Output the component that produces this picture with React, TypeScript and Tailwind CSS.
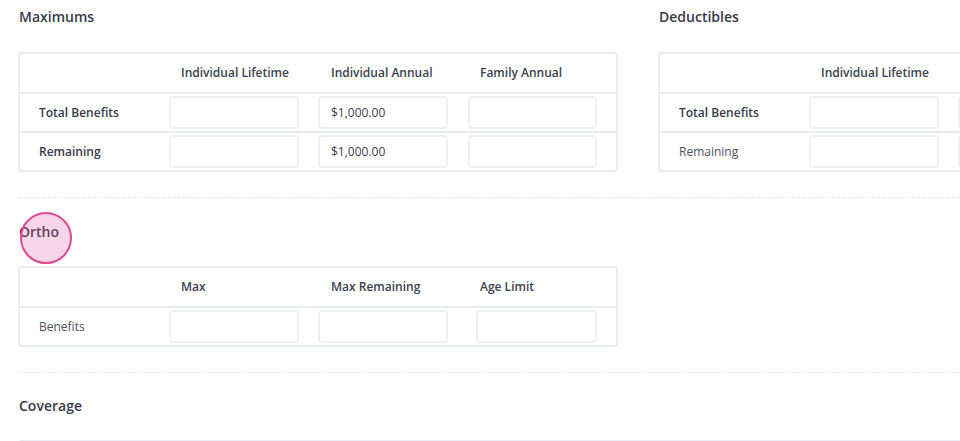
import React from "react";

type Row = { label: string; bold: boolean; values: string[] };

type Col = { title: string; width: number; inputLeft: number; inputWidth: number; textLeft: number };

const MAX_COLS: Col[] = [
  { title: "Individual Lifetime", width: 150, inputLeft: 1, inputWidth: 130, textLeft: 13 },
  { title: "Individual Annual", width: 150, inputLeft: 0, inputWidth: 130, textLeft: 13 },
  { title: "Family Annual", width: 150, inputLeft: 0, inputWidth: 129, textLeft: 12 },
];

const DED_COLS: Col[] = [
  { title: "Individual Lifetime", width: 150, inputLeft: 1, inputWidth: 130, textLeft: 13 },
  { title: "Individual Annual", width: 150, inputLeft: 0, inputWidth: 130, textLeft: 13 },
  { title: "Family Annual", width: 150, inputLeft: 0, inputWidth: 129, textLeft: 12 },
];

const ORTHO_COLS: Col[] = [
  { title: "Max", width: 150, inputLeft: 1, inputWidth: 130, textLeft: 13 },
  { title: "Max Remaining", width: 158, inputLeft: 0, inputWidth: 130, textLeft: 13 },
  { title: "Age Limit", width: 142, inputLeft: 0, inputWidth: 121, textLeft: 4 },
];

function Heading({ children }: { children: React.ReactNode }) {
  return <h3 className="h-5 pl-px text-[14px] font-semibold leading-5 text-[#353b49]">{children}</h3>;
}

function Table({ cols, rows }: { cols: Col[]; rows: Row[] }) {
  return (
    <div className="w-[600px] rounded-[4px] border-2 border-[#e8ebf0] bg-white">
      <div className="flex h-[38px] items-center text-[12px] font-semibold text-[#3b4150]">
        <div className="w-[148px] shrink-0" />
        {cols.map((c) => (
          <div key={c.title} className="shrink-0" style={{ width: c.width, paddingLeft: c.textLeft }}>
            {c.title}
          </div>
        ))}
      </div>
      {rows.map((r) => (
        <div key={r.label} className="flex h-[39px] items-center border-t-2 border-[#e8ebf0]">
          <div
            className={
              r.bold
                ? "w-[148px] shrink-0 pl-[19px] text-[12px] font-semibold text-[#353b48]"
                : "w-[148px] shrink-0 pl-[19px] text-[12px] text-[#4b5161]"
            }
          >
            {r.label}
          </div>
          {cols.map((c, i) => (
            <div key={c.title} className="shrink-0" style={{ width: c.width, paddingLeft: c.inputLeft }}>
              <input
                readOnly
                value={r.values[i] ?? ""}
                className="h-[33px] rounded-[4px] border-2 border-[#eef0f4] bg-white pl-[11px] text-[12px] text-[#3b4150] outline-none"
                style={{ width: c.inputWidth }}
              />
            </div>
          ))}
        </div>
      ))}
    </div>
  );
}

export default function App() {
  return (
    <div className="h-[441px] w-[960px] overflow-hidden bg-white pl-[18px] font-['Open_Sans','Noto_Sans',sans-serif]">
      <div className="flex w-[1300px] gap-10 pt-[7px]">
        <section className="w-[600px] shrink-0">
          <Heading>Maximums</Heading>
          <div className="mt-[25px]">
            <Table
              cols={MAX_COLS}
              rows={[
                { label: "Total Benefits", bold: true, values: ["", "$1,000.00", ""] },
                { label: "Remaining", bold: true, values: ["", "$1,000.00", ""] },
              ]}
            />
          </div>
        </section>
        <section className="w-[600px] shrink-0">
          <Heading>Deductibles</Heading>
          <div className="mt-[25px]">
            <Table
              cols={DED_COLS}
              rows={[
                { label: "Total Benefits", bold: true, values: ["", "", ""] },
                { label: "Remaining", bold: false, values: ["", "", ""] },
              ]}
            />
          </div>
        </section>
      </div>

      <div className="mt-[25px] border-t border-dashed border-[#e6e9ef]" />

      <section className="relative pt-[24px]">
        <Heading>Ortho</Heading>
        <div className="pointer-events-none absolute left-[2px] top-[14px] h-[52px] w-[52px] rounded-full border-2 border-[#dc4a93] bg-[#e4579e]/25" />
        <div className="mt-[24px]">
          <Table
            cols={ORTHO_COLS}
            rows={[{ label: "Benefits", bold: false, values: ["", "", ""] }]}
          />
        </div>
      </section>

      <div className="mt-[25px] border-t border-dashed border-[#e6e9ef]" />

      <section className="pt-[23px]">
        <Heading>Coverage</Heading>
        <div className="mt-[24px] h-10 w-[1200px] rounded-[4px] border-2 border-[#e9ecf1] bg-[#f7f9fb]" />
      </section>
    </div>
  );
}
